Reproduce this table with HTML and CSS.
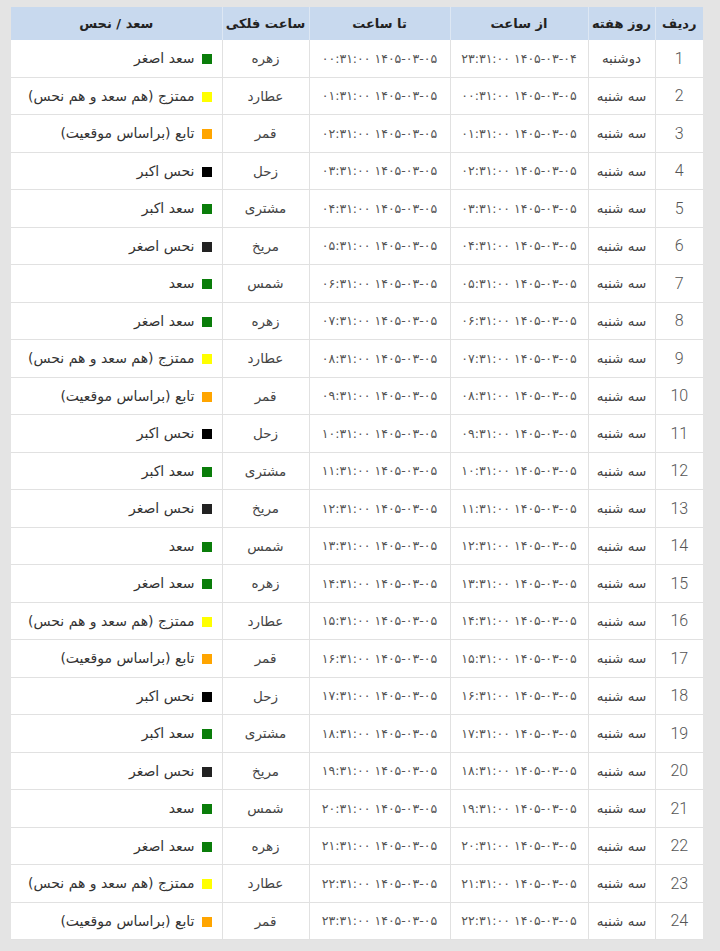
FILE: index.html
```html
<!DOCTYPE html>
<html lang="fa" dir="rtl">
<head>
<meta charset="utf-8">
<title>ساعات سعد و نحس</title>
<link rel="stylesheet" href="styles.css">
</head>
<body>
<div class="wrap">
<table class="hours">
<colgroup>
<col class="c-num"><col class="c-day"><col class="c-from"><col class="c-to"><col class="c-planet"><col class="c-state">
</colgroup>
<thead>
<tr><th>ردیف</th><th>روز هفته</th><th>از ساعت</th><th>تا ساعت</th><th>ساعت فلکی</th><th>سعد / نحس</th></tr>
</thead>
<tbody>
<tr><td class="num">1</td><td>دوشنبه</td><td class="dt"><bdo dir="ltr">۲۳:۳۱:۰۰ ۱۴۰۵-۰۳-۰۴</bdo></td><td class="dt"><bdo dir="ltr">۰۰:۳۱:۰۰ ۱۴۰۵-۰۳-۰۵</bdo></td><td>زهره</td><td class="st"><span class="sq green"></span>سعد اصغر</td></tr>
<tr><td class="num">2</td><td>سه شنبه</td><td class="dt"><bdo dir="ltr">۰۰:۳۱:۰۰ ۱۴۰۵-۰۳-۰۵</bdo></td><td class="dt"><bdo dir="ltr">۰۱:۳۱:۰۰ ۱۴۰۵-۰۳-۰۵</bdo></td><td>عطارد</td><td class="st"><span class="sq yellow"></span>ممتزج (هم سعد و هم نحس)</td></tr>
<tr><td class="num">3</td><td>سه شنبه</td><td class="dt"><bdo dir="ltr">۰۱:۳۱:۰۰ ۱۴۰۵-۰۳-۰۵</bdo></td><td class="dt"><bdo dir="ltr">۰۲:۳۱:۰۰ ۱۴۰۵-۰۳-۰۵</bdo></td><td>قمر</td><td class="st"><span class="sq orange"></span>تابع (براساس موقعیت)</td></tr>
<tr><td class="num">4</td><td>سه شنبه</td><td class="dt"><bdo dir="ltr">۰۲:۳۱:۰۰ ۱۴۰۵-۰۳-۰۵</bdo></td><td class="dt"><bdo dir="ltr">۰۳:۳۱:۰۰ ۱۴۰۵-۰۳-۰۵</bdo></td><td>زحل</td><td class="st"><span class="sq black"></span>نحس اکبر</td></tr>
<tr><td class="num">5</td><td>سه شنبه</td><td class="dt"><bdo dir="ltr">۰۳:۳۱:۰۰ ۱۴۰۵-۰۳-۰۵</bdo></td><td class="dt"><bdo dir="ltr">۰۴:۳۱:۰۰ ۱۴۰۵-۰۳-۰۵</bdo></td><td>مشتری</td><td class="st"><span class="sq green"></span>سعد اکبر</td></tr>
<tr><td class="num">6</td><td>سه شنبه</td><td class="dt"><bdo dir="ltr">۰۴:۳۱:۰۰ ۱۴۰۵-۰۳-۰۵</bdo></td><td class="dt"><bdo dir="ltr">۰۵:۳۱:۰۰ ۱۴۰۵-۰۳-۰۵</bdo></td><td>مریخ</td><td class="st"><span class="sq dark"></span>نحس اصغر</td></tr>
<tr><td class="num">7</td><td>سه شنبه</td><td class="dt"><bdo dir="ltr">۰۵:۳۱:۰۰ ۱۴۰۵-۰۳-۰۵</bdo></td><td class="dt"><bdo dir="ltr">۰۶:۳۱:۰۰ ۱۴۰۵-۰۳-۰۵</bdo></td><td>شمس</td><td class="st"><span class="sq green"></span>سعد</td></tr>
<tr><td class="num">8</td><td>سه شنبه</td><td class="dt"><bdo dir="ltr">۰۶:۳۱:۰۰ ۱۴۰۵-۰۳-۰۵</bdo></td><td class="dt"><bdo dir="ltr">۰۷:۳۱:۰۰ ۱۴۰۵-۰۳-۰۵</bdo></td><td>زهره</td><td class="st"><span class="sq green"></span>سعد اصغر</td></tr>
<tr><td class="num">9</td><td>سه شنبه</td><td class="dt"><bdo dir="ltr">۰۷:۳۱:۰۰ ۱۴۰۵-۰۳-۰۵</bdo></td><td class="dt"><bdo dir="ltr">۰۸:۳۱:۰۰ ۱۴۰۵-۰۳-۰۵</bdo></td><td>عطارد</td><td class="st"><span class="sq yellow"></span>ممتزج (هم سعد و هم نحس)</td></tr>
<tr><td class="num">10</td><td>سه شنبه</td><td class="dt"><bdo dir="ltr">۰۸:۳۱:۰۰ ۱۴۰۵-۰۳-۰۵</bdo></td><td class="dt"><bdo dir="ltr">۰۹:۳۱:۰۰ ۱۴۰۵-۰۳-۰۵</bdo></td><td>قمر</td><td class="st"><span class="sq orange"></span>تابع (براساس موقعیت)</td></tr>
<tr><td class="num">11</td><td>سه شنبه</td><td class="dt"><bdo dir="ltr">۰۹:۳۱:۰۰ ۱۴۰۵-۰۳-۰۵</bdo></td><td class="dt"><bdo dir="ltr">۱۰:۳۱:۰۰ ۱۴۰۵-۰۳-۰۵</bdo></td><td>زحل</td><td class="st"><span class="sq black"></span>نحس اکبر</td></tr>
<tr><td class="num">12</td><td>سه شنبه</td><td class="dt"><bdo dir="ltr">۱۰:۳۱:۰۰ ۱۴۰۵-۰۳-۰۵</bdo></td><td class="dt"><bdo dir="ltr">۱۱:۳۱:۰۰ ۱۴۰۵-۰۳-۰۵</bdo></td><td>مشتری</td><td class="st"><span class="sq green"></span>سعد اکبر</td></tr>
<tr><td class="num">13</td><td>سه شنبه</td><td class="dt"><bdo dir="ltr">۱۱:۳۱:۰۰ ۱۴۰۵-۰۳-۰۵</bdo></td><td class="dt"><bdo dir="ltr">۱۲:۳۱:۰۰ ۱۴۰۵-۰۳-۰۵</bdo></td><td>مریخ</td><td class="st"><span class="sq dark"></span>نحس اصغر</td></tr>
<tr><td class="num">14</td><td>سه شنبه</td><td class="dt"><bdo dir="ltr">۱۲:۳۱:۰۰ ۱۴۰۵-۰۳-۰۵</bdo></td><td class="dt"><bdo dir="ltr">۱۳:۳۱:۰۰ ۱۴۰۵-۰۳-۰۵</bdo></td><td>شمس</td><td class="st"><span class="sq green"></span>سعد</td></tr>
<tr><td class="num">15</td><td>سه شنبه</td><td class="dt"><bdo dir="ltr">۱۳:۳۱:۰۰ ۱۴۰۵-۰۳-۰۵</bdo></td><td class="dt"><bdo dir="ltr">۱۴:۳۱:۰۰ ۱۴۰۵-۰۳-۰۵</bdo></td><td>زهره</td><td class="st"><span class="sq green"></span>سعد اصغر</td></tr>
<tr><td class="num">16</td><td>سه شنبه</td><td class="dt"><bdo dir="ltr">۱۴:۳۱:۰۰ ۱۴۰۵-۰۳-۰۵</bdo></td><td class="dt"><bdo dir="ltr">۱۵:۳۱:۰۰ ۱۴۰۵-۰۳-۰۵</bdo></td><td>عطارد</td><td class="st"><span class="sq yellow"></span>ممتزج (هم سعد و هم نحس)</td></tr>
<tr><td class="num">17</td><td>سه شنبه</td><td class="dt"><bdo dir="ltr">۱۵:۳۱:۰۰ ۱۴۰۵-۰۳-۰۵</bdo></td><td class="dt"><bdo dir="ltr">۱۶:۳۱:۰۰ ۱۴۰۵-۰۳-۰۵</bdo></td><td>قمر</td><td class="st"><span class="sq orange"></span>تابع (براساس موقعیت)</td></tr>
<tr><td class="num">18</td><td>سه شنبه</td><td class="dt"><bdo dir="ltr">۱۶:۳۱:۰۰ ۱۴۰۵-۰۳-۰۵</bdo></td><td class="dt"><bdo dir="ltr">۱۷:۳۱:۰۰ ۱۴۰۵-۰۳-۰۵</bdo></td><td>زحل</td><td class="st"><span class="sq black"></span>نحس اکبر</td></tr>
<tr><td class="num">19</td><td>سه شنبه</td><td class="dt"><bdo dir="ltr">۱۷:۳۱:۰۰ ۱۴۰۵-۰۳-۰۵</bdo></td><td class="dt"><bdo dir="ltr">۱۸:۳۱:۰۰ ۱۴۰۵-۰۳-۰۵</bdo></td><td>مشتری</td><td class="st"><span class="sq green"></span>سعد اکبر</td></tr>
<tr><td class="num">20</td><td>سه شنبه</td><td class="dt"><bdo dir="ltr">۱۸:۳۱:۰۰ ۱۴۰۵-۰۳-۰۵</bdo></td><td class="dt"><bdo dir="ltr">۱۹:۳۱:۰۰ ۱۴۰۵-۰۳-۰۵</bdo></td><td>مریخ</td><td class="st"><span class="sq dark"></span>نحس اصغر</td></tr>
<tr><td class="num">21</td><td>سه شنبه</td><td class="dt"><bdo dir="ltr">۱۹:۳۱:۰۰ ۱۴۰۵-۰۳-۰۵</bdo></td><td class="dt"><bdo dir="ltr">۲۰:۳۱:۰۰ ۱۴۰۵-۰۳-۰۵</bdo></td><td>شمس</td><td class="st"><span class="sq green"></span>سعد</td></tr>
<tr><td class="num">22</td><td>سه شنبه</td><td class="dt"><bdo dir="ltr">۲۰:۳۱:۰۰ ۱۴۰۵-۰۳-۰۵</bdo></td><td class="dt"><bdo dir="ltr">۲۱:۳۱:۰۰ ۱۴۰۵-۰۳-۰۵</bdo></td><td>زهره</td><td class="st"><span class="sq green"></span>سعد اصغر</td></tr>
<tr><td class="num">23</td><td>سه شنبه</td><td class="dt"><bdo dir="ltr">۲۱:۳۱:۰۰ ۱۴۰۵-۰۳-۰۵</bdo></td><td class="dt"><bdo dir="ltr">۲۲:۳۱:۰۰ ۱۴۰۵-۰۳-۰۵</bdo></td><td>عطارد</td><td class="st"><span class="sq yellow"></span>ممتزج (هم سعد و هم نحس)</td></tr>
<tr><td class="num">24</td><td>سه شنبه</td><td class="dt"><bdo dir="ltr">۲۲:۳۱:۰۰ ۱۴۰۵-۰۳-۰۵</bdo></td><td class="dt"><bdo dir="ltr">۲۳:۳۱:۰۰ ۱۴۰۵-۰۳-۰۵</bdo></td><td>قمر</td><td class="st"><span class="sq orange"></span>تابع (براساس موقعیت)</td></tr>
</tbody>
</table>
</div>
</body>
</html>
```

FILE: styles.css
```css
html, body {
  margin: 0;
  background: #e4e4e4;
}
body {
  font-family: "DejaVu Sans", sans-serif;
}
.wrap {
  padding: 7px 17px 11px 11px;
}
.hours {
  width: 692px;
  border-collapse: collapse;
  table-layout: fixed;
  background: #fff;
}
.c-num { width: 48px; }
.c-day { width: 67px; }
.c-from { width: 138px; }
.c-to { width: 141px; }
.c-planet { width: 87px; }
.c-state { width: 211px; }

.hours th {
  background: #c8d9ee;
  color: #222;
  font-size: 13px;
  font-weight: bold;
  height: 33px;
  padding: 0;
  border-left: 1px solid #dde7f3;
  text-align: center;
  vertical-align: middle;
}
.hours th:last-child { border-left: 0; }

.hours td {
  height: 36.5px;
  padding: 0;
  border: 1px solid #e1e1e1;
  border-top: 0;
  text-align: center;
  vertical-align: middle;
  color: #444;
  font-size: 13.5px;
  white-space: nowrap;
}
.hours td:first-child { border-right: 0; }
.hours td:last-child { border-left: 0; }

.hours td.num {
  font-family: Roboto, "DejaVu Sans", sans-serif;
  font-size: 16px;
  color: #555;
  font-weight: 300;
}
.hours td.dt {
  font-size: 12.5px;
  color: #555;
}
.hours td.st {
  text-align: right;
  padding-right: 10px;
  color: #333;
  font-size: 14px;
}
.sq {
  display: inline-block;
  width: 10px;
  height: 10px;
  margin-left: 7px;
  vertical-align: -1px;
}
.green { background: #0a7d0a; }
.yellow { background: #ffff00; }
.orange { background: #ffa500; }
.black { background: #000; }
.dark { background: #222; }
```
